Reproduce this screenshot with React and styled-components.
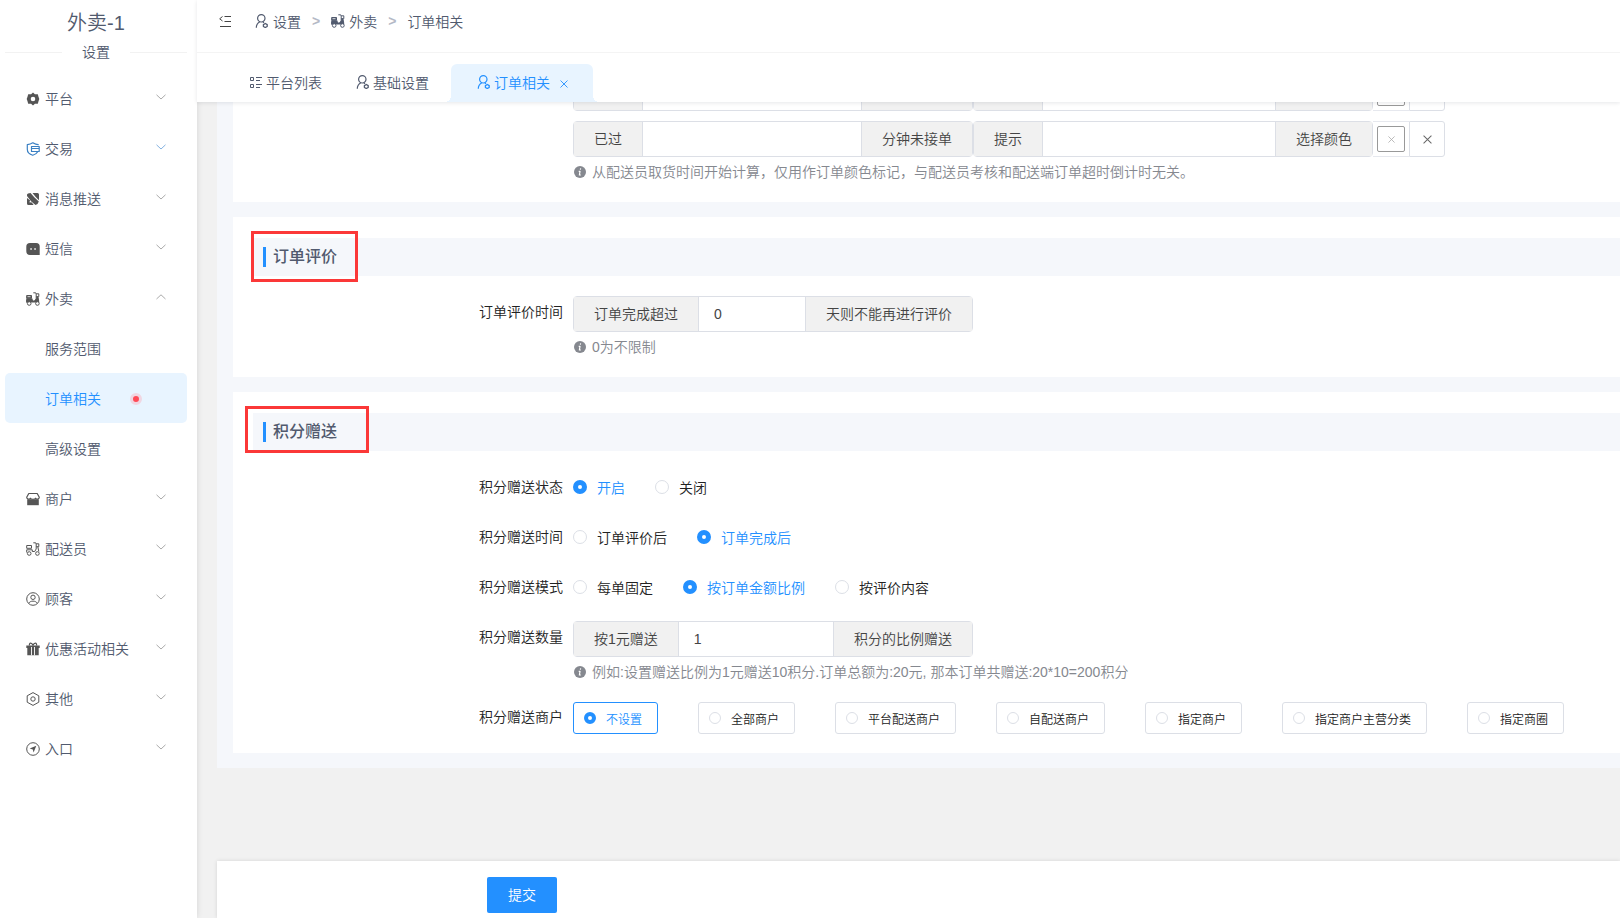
import { useState } from "react"
import styled, { createGlobalStyle, css } from "styled-components"

const GlobalStyle = createGlobalStyle`
    * {
        box-sizing: border-box;
    }
    body {
        margin: 0;
        background-color: #f1f1f1;
        color: #222;
        font-family: "Liberation Sans", "Noto Sans CJK SC", sans-serif;
        font-size: 14px;
        font-weight: 350;
    }
    button, input {
        font: inherit;
    }
    a {
        color: inherit;
        text-decoration: none;
    }
`

const Page = styled.div`
    display: flex;
    min-height: 100vh;
    overflow: hidden;
`

/* sidebar */
const Sidebar = styled.aside`
    flex: 0 0 197px;
    padding: 0 10px 0 5px;
    background-color: #fff;
    box-shadow: 0 0 6px rgba(0, 0, 0, 0.12);
    position: relative;
    z-index: 1;
`
const ShopName = styled.h1`
    margin: 0;
    padding-top: 8px;
    font-size: 20px;
    line-height: 30px;
    font-weight: 350;
    text-align: center;
    color: #515a6e;
`
const SideDivider = styled.div`
    display: flex;
    align-items: center;
    gap: 20px;
    line-height: 28px;
    color: #515a6e;
    margin-bottom: 7px;

    &::before, &::after {
        content: "";
        flex: 1;
        height: 1px;
        background-color: #f2f2f2;
    }
`
const MenuLink = styled.a`
    display: flex;
    align-items: center;
    gap: 5px;
    height: 50px;
    padding: 0 21px;
    border-radius: 5px;
    color: #515a6e;

    ${({ $sub }) => $sub && css`
        padding-left: 40px;
    `}
    ${({ $active }) => $active && css`
        background-color: #e8f4ff;
        color: #2390ff;
    `}
`
const MenuIcon = styled.span`
    display: flex;
    padding-top: 2px;
    color: ${({ $blue }) => ($blue ? "#3a80c4" : "#555")};
`
const Arrow = styled.svg`
    margin-left: auto;
    margin-bottom: 2px;
    color: ${({ $blue }) => ($blue ? "#84b2e0" : "#aaa")};
`
const Dot = styled.span`
    width: 12px;
    height: 12px;
    margin: 2px 0 0 24px;
    border-radius: 50%;
    border: 3px solid #f0d6e2;
    background-color: #ff4a57;
`

/* header and tabs */
const Main = styled.main`
    flex: 1;
    min-width: 0;
    display: flex;
    flex-direction: column;
`
const Top = styled.header`
    position: relative;
    z-index: 1;
    background-color: #fff;
    box-shadow: 0 1px 4px rgba(0, 21, 41, 0.1);
`
const NavBar = styled.div`
    display: flex;
    align-items: center;
    height: 53px;
    padding: 0 21px 10px;
    border-bottom: 1px solid #f4f4f4;
    color: #515a6e;
`
const FoldButton = styled.button`
    display: flex;
    padding: 0;
    margin-right: 23px;
    border: none;
    background: none;
    color: #444;
    cursor: pointer;
`
const Crumbs = styled.nav`
    display: flex;
    align-items: center;
    gap: 11px;
`
const Crumb = styled.a`
    display: flex;
    align-items: center;
    gap: 4px;
`
const Separator = styled.span`
    color: #b4b9c6;
    font-weight: 700;
`
const TabBar = styled.nav`
    display: flex;
    align-items: flex-end;
    gap: 2px;
    height: 49px;
    padding-left: 36px;
`
const Tab = styled.div`
    display: flex;
    align-items: center;
    height: 38px;
    padding: 0 16px 2px;
    color: #515a6e;

    ${({ $active }) => $active && css`
        position: relative;
        margin-left: 4px;
        padding: 0 25px 2px 26px;
        border-radius: 6px 6px 0 0;
        background-color: #e8f4ff;
        color: #2390ff;

        &::before, &::after {
            content: "";
            position: absolute;
            bottom: 0;
            width: 6px;
            height: 6px;
        }
        &::before {
            right: 100%;
            background: radial-gradient(circle at 0 0, transparent 6px, #e8f4ff 6px);
        }
        &::after {
            left: 100%;
            background: radial-gradient(circle at 100% 0, transparent 6px, #e8f4ff 6px);
        }
    `}
`
const TabLink = styled.a`
    display: flex;
    align-items: center;
    gap: 3px;
`
const TabClose = styled.button`
    display: flex;
    padding: 0;
    margin: 4px 0 0 10px;
    border: none;
    background: none;
    color: inherit;
    cursor: pointer;
`

/* form */
const Scroll = styled.form`
    flex: 1;
    display: flex;
    flex-direction: column;
    margin-top: -27px;
    padding-left: 20px;
`
const Sections = styled.div`
    display: flex;
    flex-direction: column;
    gap: 15px;
    padding: 0 0 15px 16px;
    background-color: #f5f7fb;
`
const Section = styled.section`
    padding: ${({ $first }) => ($first ? "0" : "21px")} 0 1px 20px;
    background-color: #fff;
`
const SectionTitle = styled.div`
    position: relative;
    display: flex;
    align-items: center;
    height: 38px;
    margin-bottom: 20px;
    padding-left: 10px;
    background-color: #f5f7fb;

    h2 {
        margin: 0;
        padding-left: 7px;
        border-left: 3px solid #2390ff;
        font-size: 16px;
        line-height: 20px;
        font-weight: 500;
        color: #515a6e;
    }
`
/* red frame drawn over a title */
const Mark = styled.span`
    position: absolute;
    top: -7px;
    left: ${({ $wide }) => ($wide ? "-8px" : "-2px")};
    width: ${({ $wide }) => ($wide ? "124px" : "107px")};
    height: ${({ $wide }) => ($wide ? "47px" : "51px")};
    border: 3px solid #fb3838;
    pointer-events: none;
`
const Row = styled.div`
    display: flex;
    align-items: flex-start;
    margin-bottom: 18px;
`
const RowLabel = styled.label`
    flex: 0 0 320px;
    padding-right: 10px;
    line-height: 32px;
    text-align: right;
`
const Field = styled.div`
    flex: 1;
    min-width: 0;
`
const Line = styled.div`
    display: flex;

    & + & {
        margin-top: 10px;
    }
`
const Group = styled.div`
    display: flex;
    width: 400px;
    height: 36px;
    border: 1px solid #dcdfe6;
    border-radius: 4px;
`
const Addon = styled.span`
    padding: 1px 20px 0;
    line-height: 33px;
    background-color: #f1f1f1;
    color: #444;
    white-space: nowrap;
`
const TextInput = styled.input`
    flex: 1;
    width: 0;
    padding: 0 15px;
    border: solid #dcdfe6;
    border-width: 0 1px;
    outline: none;
    background-color: #fff;
    color: #444;
`
const ColorCell = styled.div`
    display: flex;
    align-items: center;
    padding: 0 4px;
    height: 36px;
    border: solid #e6e8ee;
    border-width: 1px 0;
`
const ColorButton = styled.button`
    display: flex;
    align-items: center;
    justify-content: center;
    width: 28px;
    height: 26px;
    padding: 0;
    border: 1px solid #999;
    border-radius: 2px;
    background-color: #fff;
    color: #aaa;
`
const RemoveButton = styled.button`
    display: flex;
    align-items: center;
    justify-content: center;
    width: 36px;
    height: 36px;
    padding: 0;
    border: 1px solid #dcdfe6;
    border-radius: 0 3px 3px 0;
    background-color: #fff;
    color: #666;
`
const Hint = styled.div`
    display: flex;
    align-items: center;
    gap: 6px;
    padding: 4px 0 0 1px;
    line-height: 22px;
    color: #85888f;
`
const Options = styled.div`
    display: flex;
    flex-wrap: wrap;
    gap: ${({ $boxed }) => ($boxed ? "40px" : "30px")};
    padding-top: ${({ $boxed }) => ($boxed ? "1px" : "0")};
`
const Option = styled.label`
    display: flex;
    align-items: center;
    gap: 10px;
    height: 32px;
    color: ${({ $checked }) => ($checked ? "#2390ff" : "#222")};
    cursor: pointer;

    ${({ $boxed, $checked }) => $boxed && css`
        padding: 0 15px 0 10px;
        border: 1px solid ${$checked ? "#2390ff" : "#dcdfe6"};
        border-radius: 3px;
        font-size: 12px;
    `}
`
const Radio = styled.input`
    appearance: none;
    width: ${({ $small }) => ($small ? "12px" : "14px")};
    height: ${({ $small }) => ($small ? "12px" : "14px")};
    margin: 0;
    border: 1px solid #dcdfe6;
    border-radius: 50%;
    background-color: #fff;

    &:checked {
        border: ${({ $small }) => ($small ? "4px" : "5px")} solid #2390ff;
    }
`
const Footer = styled.div`
    margin-top: auto;
    padding: 16px 0 5px 270px;
    background-color: #fff;
    box-shadow: 0 0 4px rgba(0, 0, 0, 0.12);
`
const Submit = styled.button`
    width: 70px;
    height: 36px;
    padding: 0 0 2px;
    border: none;
    border-radius: 2px;
    background-color: #2390ff;
    color: #fff;
    cursor: pointer;
`

/* icons */
const Svg = ({ size = 14, box = 14, children }) => (
  <svg width={size} height={size} viewBox={`0 0 ${box} ${box}`} fill="none" stroke="currentColor" strokeLinejoin="round">
    {children}
  </svg>
)

const GearIcon = () => (
  <Svg>
    <path d="M7 .5 8.9 2.2 11.8 2.3 12.5 4.7 13.3 7 12.5 9.3 11.8 11.700 8.900 11.800 7 13.500 5.100 11.800 2.200 11.700 1.500 9.300.700 7 1.500 4.700 2.200 2.300 5.100 2.200ZM7 4.700A2.300 2.300 0 1 0 7 9.300 2.300 2.300 0 1 0 7 4.700Z" fill="currentColor" fillRule="evenodd" stroke="none" />
  </Svg>
)
const TradeIcon = () => (
  <Svg>
    <path d="M12.200 3.200V2.600C10 2.600 8.500 1.800 6.800 .800 5.200 1.800 3.500 2.400 1.300 2.600V7.200C1.300 10.300 3.800 12.400 6.800 13.300 9 12.600 10.800 11.300 11.700 9.700M5.500 4.500H13.200V9.500H5.500ZM5.500 6.500H13.200" strokeWidth="1.200" />
  </Svg>
)
const PushIcon = () => (
  <Svg>
    <path d="M2 1.500 4.500 1 8.500 5.500 12.800 9.500 11.500 12 9.500 13 5.300 9.500 1 4V2.500ZM6.500 1H11.500A1.500 1.500 0 0 1 13 2.500V8.200L9.500 4.800ZM1 6 4.200 8.600 3.300 10.300 5.800 10.600 7.600 13H2.500A1.500 1.500 0 0 1 1 11.500Z" fill="currentColor" stroke="none" />
  </Svg>
)
const SmsIcon = () => (
  <Svg>
    <path d="M4 1H10A3.600 3.600 0 0 1 13.700 4.600V13H4A3.700 3.700 0 0 1 .300 9.300V4.700A3.700 3.700 0 0 1 4 1Z" fill="currentColor" stroke="none" />
    <path d="M4.300 6.200H5.800V7.800H4.300ZM8.300 6.200H9.800V7.800H8.300Z" fill="#fff" stroke="none" />
  </Svg>
)
const ScooterIcon = ({ filled }) => (
  <Svg>
    <path d="M.700 3.500H5.500V6.300H.700Z" fill={filled ? "currentColor" : "none"} />
    <path d="M7.300 .800H9.700L10.200 2V7L8.700 9.500H6.300V7.800H.700V10.500M10.200 1.800H12.800V4.700H10.200M11.800 4.700 12.800 9.500" />
    {filled && <path d="M.300 6.500H6.500V8.500H8.300L10.300 6.500V4.500H12L13.200 10.500H.300Z" fill="currentColor" stroke="none" />}
    <circle cx="3.200" cy="11.500" r="1.800" fill="#fff" />
    <circle cx="11.400" cy="11.500" r="1.800" fill="#fff" />
    {filled && <path d="M1.500 4.700H4.500" stroke="#fff" strokeWidth=".8" />}
  </Svg>
)
const ShopIcon = () => (
  <Svg>
    <path d="M2.800 1.500H11.200L13.300 5.300C13.300 7.300 10.500 7.700 9.700 6.200 9 7.600 5 7.600 4.300 6.200 3.500 7.700.700 7.300.700 5.300Z" strokeWidth="1.200" />
    <path d="M1.200 7.300H12.800V13.200H1.200Z" fill="currentColor" stroke="none" />
  </Svg>
)
const CustomerIcon = () => (
  <Svg>
    <circle cx="7" cy="7" r="6.300" />
    <circle cx="7" cy="5.300" r="2.200" />
    <path d="M2.800 11.300C4 8.400 10 8.400 11.200 11.300" />
  </Svg>
)
const GiftIcon = () => (
  <Svg>
    <path d="M.300 3.500H13.700V6H.300ZM1.300 6H12.700V13.300H1.300Z" fill="currentColor" stroke="none" />
    <path d="M7 3.500C6 .200 2.800.300 3.500 3.500M7 3.500C8 .200 11.200.300 10.500 3.500" strokeWidth="1.200" />
    <path d="M5.500 5V13.300M8.500 5V13.300" stroke="#fff" strokeWidth=".9" />
  </Svg>
)
const OtherIcon = () => (
  <Svg>
    <path d="M7 .600 12.800 3.800V10.200L7 13.400 1.200 10.200V3.800Z" />
    <circle cx="7" cy="7" r="2.200" />
  </Svg>
)
const EntryIcon = () => (
  <Svg>
    <circle cx="7" cy="7" r="6.300" />
    <path d="M10.300 3.800 7.600 10.500 6.800 7.400 3.700 6.600Z" fill="currentColor" stroke="none" />
  </Svg>
)
const UserSetIcon = () => (
  <Svg>
    <circle cx="6.300" cy="4.300" r="3.700" strokeWidth="1.200" />
    <path d="M1.300 13.800C1.300 11 2.500 9 4.800 7.700M7.800 7.700 9 8.900" strokeWidth="1.200" />
    <path d="M10.300 9.500 12.200 10.600V12.500L10.300 13.500 8.400 12.500V10.600Z" strokeWidth="1.300" />
  </Svg>
)
const ListIcon = () => (
  <Svg>
    <path d="M1.500 2.500H4.500V5.500H1.500ZM1.500 9.500H4.500V12.500H1.500ZM7 2.500H13M7 5.500H11M7 9.500H13M7 12.500H11" />
  </Svg>
)
const FoldIcon = () => (
  <Svg>
    <path d="M6.500 2.500H13M6.500 7.500H13M2 12.500H13M4.500 2.500 1.700 4.800 4.500 7" />
  </Svg>
)
const CrossIcon = ({ size = 8 }) => (
  <Svg size={size} box={8}>
    <path d="M.500 .500 7.500 7.500M7.500 .500 .500 7.500" strokeWidth=".9" />
  </Svg>
)
const InfoIcon = () => (
  <Svg size={12}>
    <circle cx="7" cy="7" r="7" fill="currentColor" stroke="none" />
    <path d="M7.700 2.800 7.400 4.300M5.500 6.200H7L6.300 10.500H8" stroke="#fff" strokeWidth="1.400" />
  </Svg>
)

const menu = [
  { name: "平台", icon: <GearIcon /> },
  { name: "交易", icon: <TradeIcon />, blue: true },
  { name: "消息推送", icon: <PushIcon /> },
  { name: "短信", icon: <SmsIcon /> },
  { name: "外卖", icon: <ScooterIcon filled />, children: ["服务范围", "订单相关", "高级设置"] },
  { name: "商户", icon: <ShopIcon /> },
  { name: "配送员", icon: <ScooterIcon /> },
  { name: "顾客", icon: <CustomerIcon /> },
  { name: "优惠活动相关", icon: <GiftIcon /> },
  { name: "其他", icon: <OtherIcon /> },
  { name: "入口", icon: <EntryIcon /> },
]

const MenuItem = ({ item }) => (
  <>
    <MenuLink href="#">
      <MenuIcon $blue={item.blue}>{item.icon}</MenuIcon>
      {item.name}
      <Arrow $blue={item.blue} width="10" height="6" viewBox="0 0 10 6" fill="none" stroke="currentColor">
        <path d={item.children ? "M.5 5 5 .8 9.500 5" : "M.5 .8 5 5 9.500 .8"} />
      </Arrow>
    </MenuLink>
    {item.children?.map((name) => {
      const active = name === "订单相关"
      return (
        <MenuLink href="#" key={name} $sub $active={active}>
          {name}
          {active && <Dot />}
        </MenuLink>
      )
    })}
  </>
)

const TimeoutLine = () => (
  <Line>
    <Group>
      <Addon>已过</Addon>
      <TextInput aria-label="已过分钟" />
      <Addon>分钟未接单</Addon>
    </Group>
    <Group>
      <Addon>提示</Addon>
      <TextInput aria-label="提示" />
      <Addon>选择颜色</Addon>
    </Group>
    <ColorCell>
      <ColorButton type="button" aria-label="选择颜色"><CrossIcon size={7} /></ColorButton>
    </ColorCell>
    <RemoveButton type="button" aria-label="删除"><CrossIcon size={9} /></RemoveButton>
  </Line>
)

const RadioRow = ({ name, label, options, initial, boxed }) => {
  const [value, setValue] = useState(initial)
  return (
    <Row>
      <RowLabel as="span" id={name}>{label}</RowLabel>
      <Field>
        <Options role="radiogroup" aria-labelledby={name} $boxed={boxed}>
          {options.map((text) => (
            <Option key={text} $boxed={boxed} $checked={text === value}>
              <Radio
                type="radio"
                name={name}
                $small={boxed}
                checked={text === value}
                onChange={() => setValue(text)}
              />
              {text}
            </Option>
          ))}
        </Options>
      </Field>
    </Row>
  )
}

const App = () => {
  return (
    <Page>
      <GlobalStyle />
      <Sidebar>
        <ShopName>外卖-1</ShopName>
        <SideDivider>设置</SideDivider>
        <nav>
          {menu.map((item) => <MenuItem key={item.name} item={item} />)}
        </nav>
      </Sidebar>
      <Main>
        <Top>
          <NavBar>
            <FoldButton aria-label="收起菜单"><FoldIcon /></FoldButton>
            <Crumbs>
              <Crumb href="#"><UserSetIcon />设置</Crumb>
              <Separator>&gt;</Separator>
              <Crumb href="#"><ScooterIcon filled />外卖</Crumb>
              <Separator>&gt;</Separator>
              <Crumb href="#">订单相关</Crumb>
            </Crumbs>
          </NavBar>
          <TabBar>
            <Tab><TabLink href="#"><ListIcon />平台列表</TabLink></Tab>
            <Tab><TabLink href="#"><UserSetIcon />基础设置</TabLink></Tab>
            <Tab $active>
              <TabLink href="#"><UserSetIcon />订单相关</TabLink>
              <TabClose aria-label="关闭"><CrossIcon /></TabClose>
            </Tab>
          </TabBar>
        </Top>
        <Scroll onSubmit={(e) => e.preventDefault()}>
          <Sections>
            <Section $first>
              <Row>
                <RowLabel as="span" />
                <Field>
                  <TimeoutLine />
                  <TimeoutLine />
                  <Hint><InfoIcon />从配送员取货时间开始计算，仅用作订单颜色标记，与配送员考核和配送端订单超时倒计时无关。</Hint>
                </Field>
              </Row>
            </Section>
            <Section>
              <SectionTitle>
                <h2>订单评价</h2>
                <Mark />
              </SectionTitle>
              <Row>
                <RowLabel htmlFor="comment-days">订单评价时间</RowLabel>
                <Field>
                  <Group>
                    <Addon>订单完成超过</Addon>
                    <TextInput id="comment-days" defaultValue="0" />
                    <Addon>天则不能再进行评价</Addon>
                  </Group>
                  <Hint><InfoIcon />0为不限制</Hint>
                </Field>
              </Row>
            </Section>
            <Section>
              <SectionTitle>
                <h2>积分赠送</h2>
                <Mark $wide />
              </SectionTitle>
              <RadioRow name="status" label="积分赠送状态" options={["开启", "关闭"]} initial="开启" />
              <RadioRow name="time" label="积分赠送时间" options={["订单评价后", "订单完成后"]} initial="订单完成后" />
              <RadioRow
                name="mode"
                label="积分赠送模式"
                options={["每单固定", "按订单金额比例", "按评价内容"]}
                initial="按订单金额比例"
              />
              <Row>
                <RowLabel htmlFor="credit-num">积分赠送数量</RowLabel>
                <Field>
                  <Group>
                    <Addon>按1元赠送</Addon>
                    <TextInput id="credit-num" defaultValue="1" />
                    <Addon>积分的比例赠送</Addon>
                  </Group>
                  <Hint><InfoIcon />例如:设置赠送比例为1元赠送10积分.订单总额为:20元, 那本订单共赠送:20*10=200积分</Hint>
                </Field>
              </Row>
              <RadioRow
                name="store"
                label="积分赠送商户"
                options={["不设置", "全部商户", "平台配送商户", "自配送商户", "指定商户", "指定商户主营分类", "指定商圈"]}
                initial="不设置"
                boxed
              />
            </Section>
          </Sections>
          <Footer>
            <Submit>提交</Submit>
          </Footer>
        </Scroll>
      </Main>
    </Page>
  )
}

export default App
